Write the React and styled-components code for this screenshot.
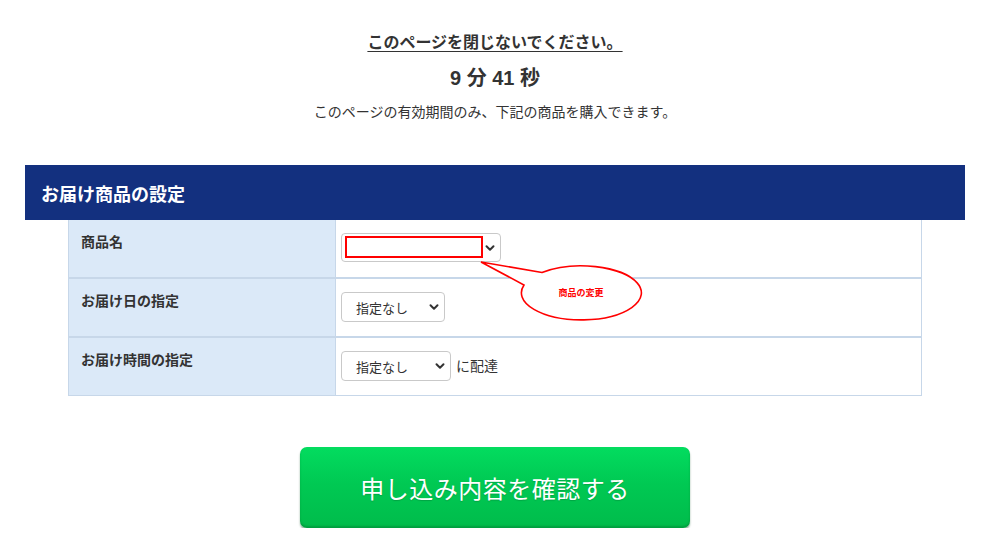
import { styled, createGlobalStyle } from "styled-components";
import { ChevronDown } from "lucide-react";

const GlobalStyle = createGlobalStyle`
  body {
    margin: 0;
    background: #fff;
    color: #333;
    font-family: "Liberation Sans", "Noto Sans CJK JP", sans-serif;
  }
`;

const Page = styled.div`
  width: 940px;
  margin-left: 25px;
  padding-top: 31px;
`;

const Notice = styled.div`
  display: flex;
  flex-direction: column;
  align-items: center;
`;

const Warning = styled.p`
  margin: 0;
  font-size: 16px;
  font-weight: bold;
  line-height: 24px;
  text-decoration: underline;
  text-underline-offset: 3px;
`;

const Timer = styled.p`
  margin: 10px 0 0;
  font-size: 20px;
  font-weight: bold;
  line-height: 26px;
`;

const Lead = styled.p`
  margin: 9px 0 0;
  font-size: 14px;
  line-height: 24px;
`;

const SectionTitle = styled.h2`
  margin: 41px 0 0;
  height: 55px;
  display: flex;
  align-items: center;
  padding-left: 16px;
  background: #13307f;
  color: #fff;
  font-size: 18px;
  font-weight: bold;
`;

const Table = styled.div`
  position: relative;
  width: 852px;
  margin: 0 auto;
  border: 1px solid #c7d7e9;
  border-top: none;
`;

const Row = styled.div`
  display: grid;
  grid-template-columns: 267px 1fr;
  border-top: ${(p) => (p.$first ? "none" : "2px solid #c7d7e9")};
`;

const Label = styled.div`
  background: #dbe9f8;
  border-right: 1px solid #c7d7e9;
  padding: 13px 12px;
  font-size: 14px;
  font-weight: bold;
  line-height: 18px;
  min-height: 57px;
  box-sizing: border-box;
`;

const Value = styled.div`
  display: flex;
  align-items: flex-start;
  gap: 5px;
  padding: 13px 5px;
  font-size: 14px;
`;

const SelectBox = styled.div`
  position: relative;
  width: ${(p) => p.$w}px;
  height: ${(p) => p.$h}px;
  box-sizing: border-box;
  border: 1px solid #c9c9c9;
  border-radius: 4px;
  background: #fff;
  display: flex;
  align-items: center;
  padding-left: 14px;
  font-size: 13px;
  color: #333;

  svg {
    position: absolute;
    right: 3px;
    top: 50%;
    transform: translateY(-50%);
  }
`;

const Suffix = styled.span`
  line-height: 30px;
`;

const Highlight = styled.div`
  position: absolute;
  left: 3px;
  top: 2px;
  width: 138px;
  height: 22px;
  box-sizing: border-box;
  border: 2px solid #f00;
`;

const Bubble = styled.svg`
  position: absolute;
  left: 331px;
  top: 30px;
  overflow: visible;
`;

const ButtonWrap = styled.div`
  display: flex;
  justify-content: center;
  margin-top: 51px;
`;

const Submit = styled.button`
  width: 390px;
  height: 81px;
  border: none;
  border-radius: 7px;
  background: linear-gradient(#03dc5f 0%, #00c953 45%, #00bc4b 100%);
  box-shadow: 0 2px 2px rgba(0, 80, 30, 0.45), inset 0 -2px 2px rgba(0, 100, 40, 0.35);
  color: #fff;
  font-family: "Noto Sans CJK JP", sans-serif;
  font-size: 24px;
  letter-spacing: 0.5px;
  text-shadow: 0 1px 1px rgba(0, 90, 40, 0.3);
  cursor: pointer;
`;

const Chevron = () => <ChevronDown size={14} strokeWidth={3.4} color="#333" />;

export default function App() {
  return (
    <>
      <GlobalStyle />
      <Page>
        <Notice>
          <Warning>このページを閉じないでください。</Warning>
          <Timer>9 分 41 秒</Timer>
          <Lead>このページの有効期間のみ、下記の商品を購入できます。</Lead>
        </Notice>

        <SectionTitle>お届け商品の設定</SectionTitle>

        <Table>
          <Row $first>
            <Label>商品名</Label>
            <Value>
              <SelectBox $w={160} $h={29}>
                <Highlight />
                <Chevron />
              </SelectBox>
            </Value>
          </Row>
          <Row>
            <Label>お届け日の指定</Label>
            <Value>
              <SelectBox $w={104} $h={30}>
                指定なし
                <Chevron />
              </SelectBox>
            </Value>
          </Row>
          <Row>
            <Label>お届け時間の指定</Label>
            <Value>
              <SelectBox $w={110} $h={30}>
                指定なし
                <Chevron />
              </SelectBox>
              <Suffix>に配達</Suffix>
            </Value>
          </Row>

          <Bubble width="250" height="80" viewBox="0 0 250 80">
            <path
              d="M142 22.5 L81 12 L124 35 A60 27 0 1 0 142 22.5 Z"
              fill="#fff"
              stroke="#f00"
              strokeWidth="1.6"
              strokeLinejoin="miter"
            />
            <text
              x="181"
              y="46"
              textAnchor="middle"
              fontSize="9"
              fontWeight="bold"
              fill="#f00"
              fontFamily="Noto Sans CJK JP, sans-serif"
            >
              商品の変更
            </text>
          </Bubble>
        </Table>

        <ButtonWrap>
          <Submit>申し込み内容を確認する</Submit>
        </ButtonWrap>
      </Page>
    </>
  );
}
